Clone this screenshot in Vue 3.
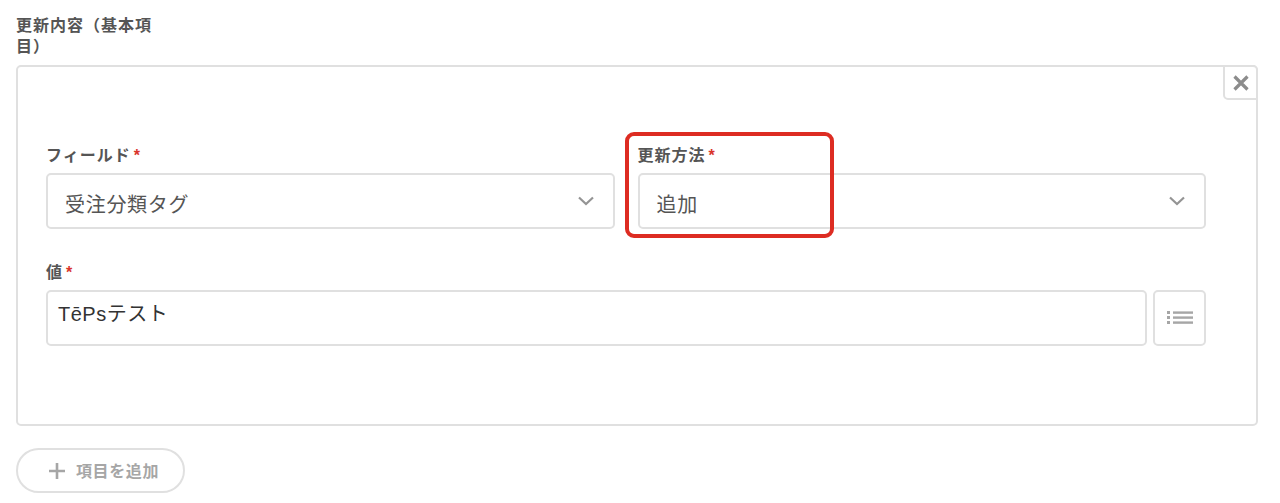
<script setup>
const rows = { field: '受注分類タグ', method: '追加', value: 'TēPsテスト' }
</script>

<template>
  <div class="page">
    <div class="section-label">更新内容（基本項目）</div>
    <div class="panel">
      <button class="close" type="button">
        <svg width="18" height="18" viewBox="0 0 18 18">
          <path d="M2.5 2.5L15.5 15.5M15.5 2.5L2.5 15.5" stroke="#8c8c8c" stroke-width="3.2" fill="none" />
        </svg>
      </button>
      <div class="row">
        <div class="field">
          <label class="label">フィールド<span class="req">*</span></label>
          <div class="control select">
            <span class="val grey">{{ rows.field }}</span>
            <svg class="chev" width="16" height="10" viewBox="0 0 16 10">
              <path d="M1 1.5L8 8L15 1.5" stroke="#949494" stroke-width="2.2" fill="none" />
            </svg>
          </div>
        </div>
        <div class="field">
          <label class="label">更新方法<span class="req">*</span></label>
          <div class="control select">
            <span class="val grey">{{ rows.method }}</span>
            <svg class="chev" width="16" height="10" viewBox="0 0 16 10">
              <path d="M1 1.5L8 8L15 1.5" stroke="#949494" stroke-width="2.2" fill="none" />
            </svg>
          </div>
        </div>
      </div>
      <div class="field value-field">
        <label class="label">値<span class="req">*</span></label>
        <div class="value-row">
          <div class="control grow">
            <span class="val dark">{{ rows.value }}</span>
          </div>
          <button class="list-btn" type="button">
            <svg width="26" height="16" viewBox="0 0 26 16">
              <g fill="#a6a6a6">
                <rect x="0" y="1" width="3" height="3" />
                <rect x="0" y="6" width="3" height="3" />
                <rect x="0" y="11" width="3" height="3" />
                <rect x="6" y="1.4" width="20" height="2.4" />
                <rect x="6" y="6.4" width="20" height="2.4" />
                <rect x="6" y="11.4" width="20" height="2.4" />
              </g>
            </svg>
          </button>
        </div>
      </div>
    </div>
    <button class="add" type="button">
      <svg width="18" height="18" viewBox="0 0 18 18">
        <path d="M9 1V17M1 9H17" stroke="#a6a6a6" stroke-width="2.6" fill="none" />
      </svg>
      <span>項目を追加</span>
    </button>
    <div class="highlight"></div>
  </div>
</template>

<style>
body {
  background: #fff;
}
</style>

<style scoped>
.page {
  position: relative;
  width: 1280px;
  height: 503px;
  overflow: hidden;
  padding: 15px 22px 0 16px;
  box-sizing: border-box;
  font-family: "Liberation Sans", "Noto Sans CJK JP", sans-serif;
}

.section-label {
  width: 140px;
  font-size: 16px;
  font-weight: 700;
  letter-spacing: 1px;
  line-height: 21px;
  color: #555;
}

.panel {
  position: relative;
  margin-top: 8px;
  height: 361px;
  box-sizing: border-box;
  border: 2px solid #e0e0e0;
  border-radius: 5px;
  padding: 77px 50px 0 28px;
}

.close {
  position: absolute;
  top: -2px;
  right: -2px;
  width: 35px;
  height: 35px;
  padding: 0;
  display: flex;
  align-items: center;
  justify-content: center;
  background: #fff;
  border: 2px solid #e0e0e0;
  border-radius: 0 5px 0 5px;
}

.row {
  display: grid;
  grid-template-columns: 1fr 1fr;
  column-gap: 23px;
}

.label {
  display: block;
  height: 20px;
  margin-bottom: 9px;
  font-size: 16px;
  font-weight: 700;
  letter-spacing: 1px;
  line-height: 24px;
  color: #555;
}

.req {
  margin-left: 3px;
  color: #d9342b;
}

.control {
  height: 56px;
  box-sizing: border-box;
  border: 2px solid #e0e0e0;
  border-radius: 5px;
  display: flex;
  align-items: center;
  padding: 0 17px;
  background: #fff;
}

.select {
  justify-content: space-between;
  padding-right: 19px;
}

.val {
  font-size: 20px;
  letter-spacing: 0.7px;
  line-height: 24px;
}

.grey {
  color: #555;
  margin-top: 8px;
}

.dark {
  color: #333;
  letter-spacing: 0.5px;
  margin-top: -9px;
}

.value-field {
  margin-top: 32px;
}

.value-row {
  display: flex;
  gap: 6px;
}

.grow {
  flex: 1;
  padding-left: 10px;
}

.list-btn {
  width: 53px;
  height: 56px;
  padding: 0;
  box-sizing: border-box;
  display: flex;
  align-items: center;
  justify-content: center;
  background: #fff;
  border: 2px solid #e0e0e0;
  border-radius: 5px;
}

.add {
  margin-top: 22px;
  width: 169px;
  height: 45px;
  box-sizing: border-box;
  display: flex;
  align-items: center;
  justify-content: center;
  gap: 10px;
  padding: 0 0 0 6px;
  background: #fff;
  border: 2px solid #e0e0e0;
  border-radius: 23px;
  font-family: inherit;
  font-size: 16px;
  font-weight: 700;
  letter-spacing: 0.6px;
  color: #a6a6a6;
}

.add span {
  margin-top: -2px;
}

.highlight {
  position: absolute;
  left: 625px;
  top: 132px;
  width: 209px;
  height: 106px;
  box-sizing: border-box;
  border: 4px solid #dd2c22;
  border-radius: 9px;
}
</style>
